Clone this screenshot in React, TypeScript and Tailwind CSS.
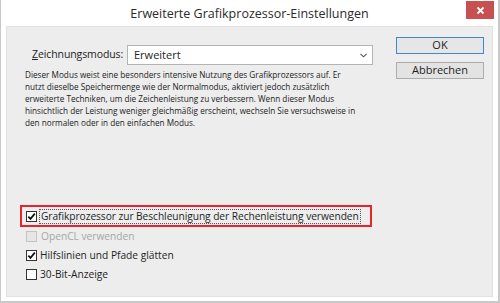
import React from "react";

function Check({ checked, disabled }: { checked?: boolean; disabled?: boolean }) {
  return (
    <span
      className={
        "flex h-[11px] w-[11px] shrink-0 items-center justify-center border " +
        (disabled ? "border-[#c4c4c4] bg-[#e6e6e6]" : "border-[#333333] bg-white")
      }
    >
      {checked && (
        <svg width="9" height="9" viewBox="0 0 9 9">
          <path d="M1.3 4.6 L3.5 6.9 L7.8 1.6" fill="none" stroke="#111" strokeWidth="1.7" />
        </svg>
      )}
    </span>
  );
}

export default function App() {
  const font = { fontFamily: '"Open Sans", "Noto Sans", sans-serif' };
  return (
    <div
      className="relative flex h-[303px] w-[500px] flex-col border-r-2 border-b-2 border-l border-[#c9c9c9] bg-white text-[#1e1e1e]"
      style={font}
    >
      {/* title bar */}
      <div className="relative flex h-[26px] shrink-0 items-center justify-center">
        <span className="mt-[3px] text-[12.5px] text-[#2b2b2b]">Erweiterte Grafikprozessor-Einstellungen</span>
        <div className="absolute right-[4px] top-[1px] flex h-[18px] w-[28px] items-center justify-center bg-[#c75050]">
          <svg width="9" height="9" viewBox="0 0 9 9">
            <path d="M1.5 1.5 L7.5 7.5 M7.5 1.5 L1.5 7.5" stroke="#fff" strokeWidth="1.8" />
          </svg>
        </div>
      </div>
      {/* client area */}
      <div className="mx-[5px] mb-[4px] flex flex-1 border border-[#e2e2e2] bg-[#ededed]">
        <div className="flex w-[383px] flex-col pl-[18px] pt-[18px]">
          <div className="flex h-[20px] items-center">
            <span className="ml-[7px] w-[95px] whitespace-nowrap text-[10.5px] tracking-[-0.1px]">
              <span className="underline">Z</span>eichnungsmodus:
            </span>
            <div className="relative flex h-[20px] w-[246px] items-center border border-[#b4b4b4] bg-white pl-[6px] text-[11px]">
              Erweitert
              <svg className="absolute right-[5px] top-[7px]" width="7" height="5" viewBox="0 0 7 5">
                <path d="M0.5 0.8 L3.5 3.8 L6.5 0.8" fill="none" stroke="#555" strokeWidth="1.1" />
              </svg>
            </div>
          </div>
          <p className="mt-[4px] whitespace-nowrap text-[8.2px] leading-[12px] text-[#222]">
            Dieser Modus weist eine besonders intensive Nutzung des Grafikprozessors auf. Er
            <br />
            nutzt dieselbe Speichermenge wie der Normalmodus, aktiviert jedoch zusätzlich
            <br />
            erweiterte Techniken, um die Zeichenleistung zu verbessern. Wenn dieser Modus
            <br />
            hinsichtlich der Leistung weniger gleichmäßig erscheint, wechseln Sie versuchsweise in
            <br />
            den normalen oder in den einfachen Modus.
          </p>
          <div className="mt-[76px] ml-[-5px] flex h-[22px] w-[352px] items-center border-2 border-[#e5242b] pl-[4px]">
            <Check checked />
            <span className="ml-[2px] whitespace-nowrap border border-dotted border-[#555] px-[1px] text-[10.2px] leading-[13px] tracking-[-0.05px]">
              Grafikprozessor zur Beschleunigung der Rechenleistung verwenden
            </span>
          </div>
          <div className="flex h-[19px] items-center pl-[1px]">
            <Check disabled />
            <span className="ml-[4px] whitespace-nowrap text-[10.2px] text-[#a6a6a6]">OpenCL verwenden</span>
          </div>
          <div className="flex h-[19px] items-center pl-[1px]">
            <Check checked />
            <span className="ml-[3px] whitespace-nowrap text-[10.2px]">Hilfslinien und Pfade glätten</span>
          </div>
          <div className="flex h-[19px] items-center pl-[1px]">
            <Check />
            <span className="ml-[3px] whitespace-nowrap text-[10.2px]">30-Bit-Anzeige</span>
          </div>
        </div>
        <div className="flex flex-col pl-[6px] pt-[10px]">
          <button className="flex h-[17px] w-[88px] items-center justify-center border border-[#3d8ad0] bg-[#e6e6e6] text-[11px]">
            OK
          </button>
          <button className="mt-[8px] flex h-[17px] w-[88px] items-center justify-center border border-[#acacac] bg-[#e3e3e3] text-[11px]">
            Abbrechen
          </button>
        </div>
      </div>
    </div>
  );
}
